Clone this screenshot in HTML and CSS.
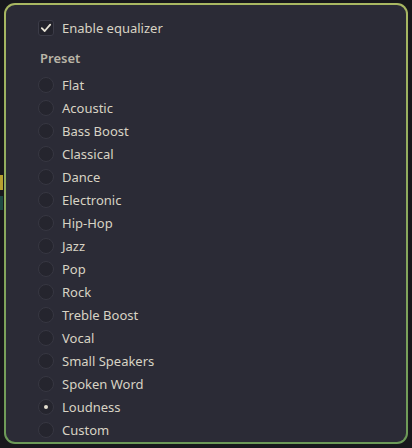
FILE: index.html
```html
<!DOCTYPE html>
<html lang="en">
<head>
    <meta charset="UTF-8">
    <meta name="viewport" content="width=device-width, initial-scale=1.0">
    <title>Equalizer</title>
    <link rel="stylesheet" href="styles.css">
</head>
<body>
<div class="popover">
    <label class="check-row">
        <span class="checkbox">
            <svg width="12" height="12" viewBox="0 0 12 12"><path d="M1.8 6.2 L4.7 9 L10.2 2.6" fill="none" stroke="#e6e2d4" stroke-width="1.8" stroke-linecap="round" stroke-linejoin="round"/></svg>
        </span>
        <span>Enable equalizer</span>
    </label>

    <div class="section-title">Preset</div>

    <ul class="preset-list">
        <li><span class="radio"></span>Flat</li>
        <li><span class="radio"></span>Acoustic</li>
        <li><span class="radio"></span>Bass Boost</li>
        <li><span class="radio"></span>Classical</li>
        <li><span class="radio"></span>Dance</li>
        <li><span class="radio"></span>Electronic</li>
        <li><span class="radio"></span>Hip-Hop</li>
        <li><span class="radio"></span>Jazz</li>
        <li><span class="radio"></span>Pop</li>
        <li><span class="radio"></span>Rock</li>
        <li><span class="radio"></span>Treble Boost</li>
        <li><span class="radio"></span>Vocal</li>
        <li><span class="radio"></span>Small Speakers</li>
        <li><span class="radio"></span>Spoken Word</li>
        <li><span class="radio checked"></span>Loudness</li>
        <li><span class="radio"></span>Custom</li>
    </ul>
</div>
</body>
</html>
```

FILE: styles.css
```css
body {
    margin: 0;
    height: 448px;
    overflow: hidden;
    font-family: "Noto Sans", "Open Sans", sans-serif;
    font-size: 13px;
    color: #d8d3c4;
    background:
        linear-gradient(to bottom, transparent 175px, #b8a030 175px, #b8a030 190px, transparent 190px, transparent 196px, #1f4a44 196px, #1f4a44 210px, transparent 210px) 0 0 / 3px 100% no-repeat,
        #18181c;
}

.popover {
    box-sizing: border-box;
    margin: 3px 4px 0 4px;
    width: 404px;
    height: 441px;
    border: 2px solid transparent;
    border-radius: 11px;
    background:
        linear-gradient(#2b2b36, #2b2b36) padding-box,
        linear-gradient(to bottom, #a9b862, #6c9a58) border-box;
    padding: 11px 0 0 32px;
}

.check-row {
    display: flex;
    align-items: center;
    gap: 8px;
    height: 24px;
}

.checkbox {
    box-sizing: border-box;
    width: 16px;
    height: 16px;
    border: 1px solid #3b3b47;
    border-radius: 3px;
    background: #23232c;
    display: flex;
    align-items: center;
    justify-content: center;
}

.section-title {
    font-weight: 600;
    color: #bab5a7;
    margin: 8px 0 0 2px;
    height: 20px;
    line-height: 20px;
}

.preset-list {
    list-style: none;
    margin: 5px 0 0 0;
    padding: 0;
}

.preset-list li {
    display: flex;
    align-items: center;
    gap: 8px;
    height: 23px;
}

.radio {
    box-sizing: border-box;
    width: 16px;
    height: 16px;
    border-radius: 50%;
    border: 1px solid #373742;
    background: #25252e;
    display: flex;
    align-items: center;
    justify-content: center;
}

.radio.checked::after {
    content: "";
    width: 4px;
    height: 4px;
    border-radius: 50%;
    background: #e4dfcf;
}
```
